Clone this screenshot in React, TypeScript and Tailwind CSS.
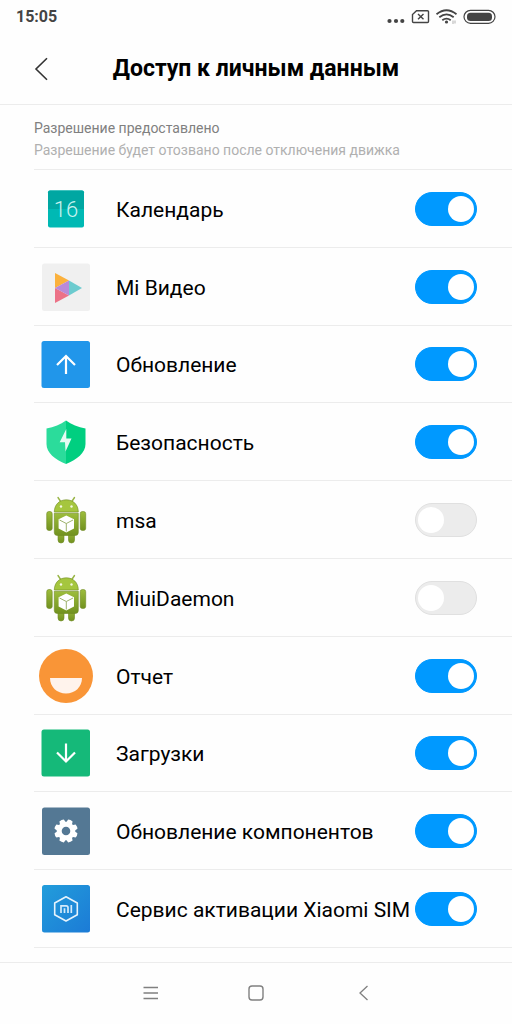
import { useState } from 'react';
import type { ReactNode } from 'react';

interface AppItem {
  id: string;
  name: string;
  icon: ReactNode;
  enabled: boolean;
}

const IconBox = ({ children }: { children: ReactNode }) => (
  <svg viewBox="0 0 64 64" className="size-16 shrink-0" aria-hidden="true">
    {children}
  </svg>
);

const CalendarIcon = () => (
  <IconBox>
    <rect x="14" y="13.5" width="36" height="37" rx="2" fill="#00b9b4" />
    <path d="M14 32V15.5a2 2 0 0 1 2-2h32a2 2 0 0 1 2 2V32z" fill="#00a7a2" />
    <text
      x="32"
      y="40"
      textAnchor="middle"
      fill="#c8f2ef"
      className="font-['Roboto',sans-serif] text-[22px] font-light"
    >
      16
    </text>
  </IconBox>
);

const VideoIcon = () => (
  <IconBox>
    <rect x="8" y="8.5" width="48" height="47.5" rx="2.5" fill="#f0f0f0" />
    <path d="M21 18 35 25.5 21 33z" fill="#fbb13c" />
    <path d="M21 33 35 40.5 21 48z" fill="#ec7287" />
    <path d="M35 25.5V40.5L21 33z" fill="#b98ad8" />
    <path d="M35 25.5 48 33 35 40.5z" fill="#6ccbcf" />
  </IconBox>
);

const UpdateIcon = () => (
  <IconBox>
    <rect x="7.5" y="9" width="48.5" height="47" rx="2.5" fill="#2196ea" />
    <path d="M32 42V24M23 33l9-9 9 9" fill="none" stroke="#fff" strokeWidth="2.2" />
  </IconBox>
);

const SecurityIcon = () => (
  <IconBox>
    <path d="M32 10.5C26.5 14.5 20 17 12.5 18.5V34C12.5 43 21 49.5 32 54z" fill="#2bdc9b" />
    <path d="M32 10.5C37.5 14.5 44 17 51.5 18.5V34C51.5 43 43 49.5 32 54z" fill="#00cf80" />
    <path d="M32.3 19 25.7 32.3H31L31.5 41.5 37.5 28.5H32.3z" fill="#e6fbf3" />
  </IconBox>
);

const AndroidIcon = () => (
  <IconBox>
    <defs>
      <linearGradient id="droid" x1="0" y1="0" x2="0" y2="1">
        <stop offset="0" stopColor="#9dbd3c" />
        <stop offset="1" stopColor="#71911f" />
      </linearGradient>
    </defs>
    <g stroke="#6f8a22" strokeWidth="0.6">
      <path d="M24 9.5 27 14M40.5 9.5 37.5 14" stroke="#98b545" strokeWidth="1.4" strokeLinecap="round" />
      <rect x="24" y="42" width="6" height="13" rx="3" fill="url(#droid)" />
      <rect x="34.5" y="42" width="6" height="13" rx="3" fill="url(#droid)" />
      <path d="M20.3 24C20.3 16.5 25.5 11.8 32.3 11.8S44.3 16.5 44.3 24z" fill="#a5c63e" />
      <path d="M20.3 25.2H44.3V44.5a3 3 0 0 1-3 3H23.3a3 3 0 0 1-3-3z" fill="url(#droid)" />
      <rect x="12.7" y="23.5" width="5.5" height="19" rx="2.2" fill="url(#droid)" />
      <rect x="46.2" y="23.5" width="5.5" height="19" rx="2.2" fill="url(#droid)" />
    </g>
    <circle cx="27" cy="18.5" r="1.2" fill="#f4f8e4" />
    <circle cx="37.5" cy="18.5" r="1.2" fill="#f4f8e4" />
    <path d="M32.3 27.5 40 31.2V40.5L32.3 44.5 24.6 40.5V31.2z" fill="#fff" />
    <path d="M25.5 32 32.3 35.5 39 32M32.3 35.5V43.5" fill="none" stroke="#93a95c" strokeWidth="0.9" />
  </IconBox>
);

const ReportIcon = () => (
  <IconBox>
    <circle cx="32" cy="32" r="27" fill="#f99537" />
    <path d="M16 34H48C48 43 41 49.5 32 49.5S16 43 16 34z" fill="#fff3ec" />
  </IconBox>
);

const DownloadsIcon = () => (
  <IconBox>
    <rect x="7.5" y="8.5" width="48.5" height="47" rx="2.5" fill="#15b979" />
    <path d="M32 22.5V40.5M23 31.5l9 9 9-9" fill="none" stroke="#fff" strokeWidth="2.2" />
  </IconBox>
);

const ComponentsIcon = () => (
  <IconBox>
    <rect x="8" y="8.5" width="48" height="47.5" rx="2.5" fill="#547894" />
    <circle cx="32" cy="32" r="6.8" fill="none" stroke="#fff" strokeWidth="5" />
    {[22.5, 67.5, 112.5, 157.5, 202.5, 247.5, 292.5, 337.5].map(angle => (
      <path
        key={angle}
        d="M28.8 24.5 29.6 20.6Q32 19.8 34.4 20.6L35.2 24.5z"
        fill="#fff"
        transform={`rotate(${angle} 32 32)`}
      />
    ))}
  </IconBox>
);

const SimIcon = () => (
  <IconBox>
    <defs>
      <linearGradient id="sim" x1="0" y1="0" x2="1" y2="1">
        <stop offset="0" stopColor="#229ddb" />
        <stop offset="1" stopColor="#1c7bd6" />
      </linearGradient>
    </defs>
    <rect x="8" y="8" width="48" height="47.5" rx="2.5" fill="url(#sim)" />
    <path
      d="M32 19.8 43.3 26V37.8L32 44 20.7 37.8V26z"
      fill="none"
      stroke="#e6f3fc"
      strokeWidth="1.6"
      strokeLinejoin="round"
    />
    <path
      d="M27 36V28.8H32.2Q34 28.8 34 30.6V36M30.5 31.3V36M37.3 28V36"
      fill="none"
      stroke="#d3eafa"
      strokeWidth="1.7"
    />
  </IconBox>
);

const initialApps: AppItem[] = [
  { id: 'calendar', name: 'Календарь', icon: <CalendarIcon />, enabled: true },
  { id: 'video', name: 'Mi Видео', icon: <VideoIcon />, enabled: true },
  { id: 'update', name: 'Обновление', icon: <UpdateIcon />, enabled: true },
  { id: 'security', name: 'Безопасность', icon: <SecurityIcon />, enabled: true },
  { id: 'msa', name: 'msa', icon: <AndroidIcon />, enabled: false },
  { id: 'daemon', name: 'MiuiDaemon', icon: <AndroidIcon />, enabled: false },
  { id: 'report', name: 'Отчет', icon: <ReportIcon />, enabled: true },
  { id: 'downloads', name: 'Загрузки', icon: <DownloadsIcon />, enabled: true },
  { id: 'components', name: 'Обновление компонентов', icon: <ComponentsIcon />, enabled: true },
  { id: 'sim', name: 'Сервис активации Xiaomi SIM', icon: <SimIcon />, enabled: true },
];

const StatusBar = () => (
  <div className="flex h-[33px] items-center justify-between px-4 text-[#444]">
    <span className="text-base font-bold">15:05</span>
    <svg viewBox="0 0 112 20" className="h-5 w-28" fill="none" stroke="currentColor" aria-hidden="true">
      <g fill="currentColor" stroke="none">
        <circle cx="5.5" cy="14" r="2.1" />
        <circle cx="12" cy="14" r="2.1" />
        <circle cx="18.3" cy="14" r="2.1" />
      </g>
      <path d="M32.5 3.7H43.5a1 1 0 0 1 1 1V14.5a1 1 0 0 1-1 1H29.5a1 1 0 0 1-1-1V7.5z" strokeWidth="1.4" />
      <path d="M34 7 39.5 12.3M39.5 7 34 12.3" strokeWidth="1.4" />
      <path d="M52.5 7.3Q62.5-.7 72.5 7.3M55.3 10.3Q62.5 4.5 69.7 10.3M58.3 13.3Q62.5 10 66.7 13.3" strokeWidth="1.8" />
      <circle cx="62.5" cy="15" r="1.6" fill="currentColor" stroke="none" />
      <path d="M69 13.5V17M71 13.5V16.5" strokeWidth="0.8" opacity="0.5" />
      <rect x="80" y="3.3" width="31" height="13" rx="6.5" strokeWidth="1.2" />
      <rect x="83" y="5.7" width="25" height="8.2" rx="3.5" fill="currentColor" stroke="none" />
    </svg>
  </div>
);

export default function App() {
  const [apps, setApps] = useState(initialApps);

  const toggleApp = (id: string) => {
    setApps(prev => prev.map(app => (app.id === id ? { ...app, enabled: !app.enabled } : app)));
  };

  return (
    <div className="flex min-h-screen flex-col bg-[#fefefe] font-['Roboto',sans-serif] text-black">
      <StatusBar />

      <header className="grid h-[72px] grid-cols-[82px_1fr_82px] items-center border-b border-[#ececec]">
        <button type="button" aria-label="Назад" className="flex h-12 items-center pl-8">
          <svg viewBox="0 0 20 24" className="h-6 w-5" fill="none" stroke="#333" strokeWidth="1.6" aria-hidden="true">
            <path d="M15 1.2 4 12 15 22.8" />
          </svg>
        </button>
        <h1 className="text-center text-[23px] leading-8 font-bold whitespace-nowrap">Доступ к личным данным</h1>
      </header>

      <main className="mb-3.5 ml-[34px] flex flex-1 flex-col">
        <div className="border-b border-[#ececec] pt-3 pb-2 text-sm leading-[22px]">
          <p className="text-[#808080]">Разрешение предоставлено</p>
          <p className="text-[#b0b0b0]">Разрешение будет отозвано после отключения движка</p>
        </div>

        <ul className="flex flex-1 flex-col">
          {apps.map(app => (
            <li key={app.id} className="flex flex-1 items-center border-b border-[#ececec] pt-px pr-[35px]">
              {app.icon}
              <label htmlFor={app.id} className="min-w-0 flex-1 pt-0.5 pl-[18px] text-[21px] leading-7 whitespace-nowrap">
                {app.name}
              </label>
              <input
                id={app.id}
                type="checkbox"
                role="switch"
                checked={app.enabled}
                onChange={() => toggleApp(app.id)}
                className="flex h-[34px] w-[62px] shrink-0 cursor-pointer appearance-none items-center rounded-full border border-[#e0e0e0] bg-[#ececec] px-0.5 before:size-[26px] before:rounded-full before:bg-white checked:justify-end checked:border-[#0099ff] checked:bg-[#0099ff]"
              />
            </li>
          ))}
        </ul>
      </main>

      <nav className="flex h-[62px] items-center justify-center gap-[84px] border-t border-[#ececec] pb-0.5">
        <button type="button" aria-label="Меню">
          <svg viewBox="0 0 24 24" className="size-6" fill="none" stroke="#808080" strokeWidth="1.3" aria-hidden="true">
            <path d="M7.5 6.5H22M7.5 12H22M7.5 17.5H22" />
          </svg>
        </button>
        <button type="button" aria-label="Домой">
          <svg viewBox="0 0 24 24" className="size-6" fill="none" stroke="#808080" strokeWidth="1.4" aria-hidden="true">
            <rect x="5" y="5" width="14" height="14" rx="3" />
          </svg>
        </button>
        <button type="button" aria-label="Назад">
          <svg viewBox="0 0 24 24" className="size-6" fill="none" stroke="#808080" strokeWidth="1.3" aria-hidden="true">
            <path d="M15.5 5 8 12 15.5 19" />
          </svg>
        </button>
      </nav>
    </div>
  );
}
